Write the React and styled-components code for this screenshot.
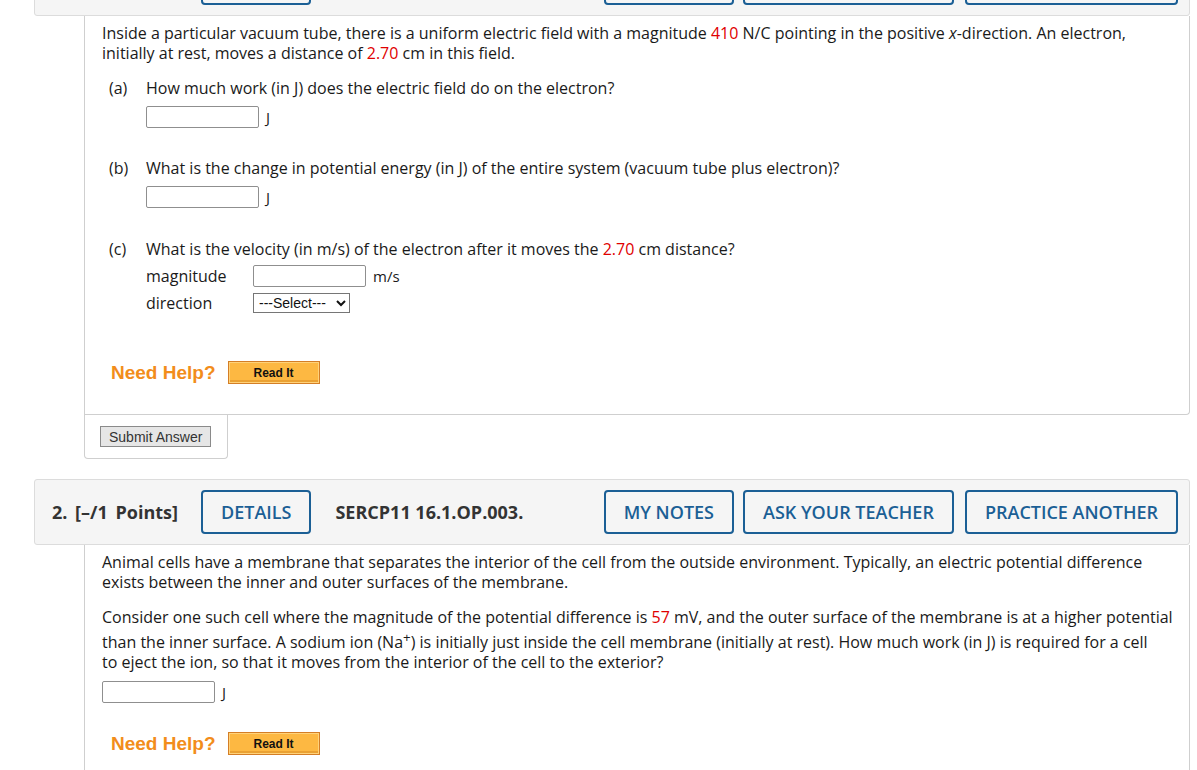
import React from 'react';
import styled, {createGlobalStyle} from 'styled-components';

const GlobalStyle = createGlobalStyle`
  body {
    margin: 0;
    background: #fff;
    overflow: hidden;
  }
`;

const Page = styled.div`
  width: 1156px;
  padding-left: 34px;
  margin-top: -50px;
`;

const Question = styled.section`
  display: flex;
  flex-direction: column;
  margin-bottom: 20px;
`;

const QHeader = styled.div`
  display: flex;
  align-items: center;
  height: 64px;
  padding: 0 11px 0 17px;
  background: #f5f5f5;
  border: 1px solid #dcdcdc;
  border-radius: 3px;
  font-family: "Open Sans", "Noto Sans", sans-serif;
`;

const QNumber = styled.span`
  font-size: 18px;
  font-weight: 700;
  color: #333;
  margin-right: 23px;
  word-spacing: 3px;
`;

const QCode = styled.span`
  font-size: 18px;
  font-weight: 700;
  color: #333;
  margin-left: 24px;
`;

const HeaderButton = styled.button`
  height: 44px;
  padding: 0 18px;
  margin-left: ${p => (p.$push ? 'auto' : '0')};
  margin-right: ${p => p.$gap || 0}px;
  background: transparent;
  border: 2px solid #1b5f95;
  border-radius: 4px;
  color: #1b5f95;
  font-family: "Open Sans", "Noto Sans", sans-serif;
  font-size: 18px;
  font-weight: 600;
  white-space: nowrap;
`;

const QBody = styled.div`
  margin-left: 50px;
  padding: 7px 12px 0 17px;
  height: ${p => p.$height}px;
  box-sizing: border-box;
  border: 1px solid #cfcfcf;
  border-top: none;
  border-bottom-right-radius: ${p => (p.$open ? 0 : 4)}px;
  font-family: "Open Sans", "Noto Sans", sans-serif;
  font-size: 16px;
  line-height: 20px;
  color: #1a1a1a;
`;

const Para = styled.p`
  margin: 0 0 15px;
`;

const Num = styled.span`
  color: #e00000;
`;

const Part = styled.div`
  display: grid;
  grid-template-columns: 37px 1fr;
  margin: 0 0 0 7px;
  padding-bottom: ${p => p.$after || 0}px;
`;

const PartLabel = styled.span``;

const PartContent = styled.div`
  display: flex;
  flex-direction: column;
`;

const AnswerRow = styled.div`
  display: flex;
  align-items: center;
  gap: 7px;
  margin-top: ${p => p.$top || 0}px;
`;

const FieldLabel = styled.span`
  width: 100px;
`;

const AnswerInput = styled.input`
  width: 113px;
  height: 22px;
  box-sizing: border-box;
  border: 1px solid #8f8f8f;
  border-radius: 2px;
  margin: 0;
  background: #fff;
`;

const Unit = styled.span`
  font-size: 15px;
`;

const Select = styled.select`
  width: 97px;
  height: 20px;
  box-sizing: border-box;
  border: 1px solid #767676;
  border-radius: 0;
  background: #fff;
  font-family: "Liberation Sans", Arial, sans-serif;
  font-size: 14px;
  color: #111;
  padding: 0 0 0 1px;
  margin: 0;
`;

const HelpRow = styled.div`
  display: flex;
  align-items: center;
  gap: 12px;
  margin: ${p => p.$top}px 0 0 9px;
`;

const NeedHelp = styled.span`
  font-family: "Liberation Sans", Arial, sans-serif;
  font-size: 19px;
  font-weight: 700;
  color: #f28d1b;
`;

const ReadIt = styled.button`
  width: 92px;
  height: 23px;
  padding: 0;
  background: #fdb842;
  border: 1px solid #d47e26;
  box-shadow: inset 0 0 0 1px #ffd27a, inset 0 -2px 0 1px #eaa133;
  font-family: "Liberation Sans", Arial, sans-serif;
  font-size: 12px;
  font-weight: 700;
  color: #111;
`;

const SubmitTab = styled.div`
  display: flex;
  align-items: center;
  margin-left: 50px;
  width: 144px;
  height: 44px;
  padding-left: 15px;
  box-sizing: border-box;
  border: 1px solid #cfcfcf;
  border-top: none;
  border-radius: 0 0 4px 4px;
`;

const SubmitButton = styled.button`
  height: 21px;
  padding: 0 8px;
  background: #e6e6e6;
  border: 1px solid #8a8a8a;
  border-radius: 0;
  font-family: "Liberation Sans", Arial, sans-serif;
  font-size: 14px;
  color: #333;
`;

const Header = ({num, code}) => (
  <QHeader>
    <QNumber>{num}. [–/1 Points]</QNumber>
    <HeaderButton>DETAILS</HeaderButton>
    <QCode>{code}</QCode>
    <HeaderButton $push $gap={9}>MY NOTES</HeaderButton>
    <HeaderButton $gap={11}>ASK YOUR TEACHER</HeaderButton>
    <HeaderButton>PRACTICE ANOTHER</HeaderButton>
  </QHeader>
);

const Help = ({top}) => (
  <HelpRow $top={top}>
    <NeedHelp>Need Help?</NeedHelp>
    <ReadIt>Read It</ReadIt>
  </HelpRow>
);

export default function App() {
  return (
    <Page>
      <GlobalStyle />
      <Question>
        <Header num={1} code="SERCP11 16.1.OP.001." />
        <QBody $height={399}>
          <Para>
            Inside a particular vacuum tube, there is a uniform electric field with a magnitude <Num>410</Num> N/C
            pointing in the positive <i>x</i>-direction. An electron, initially at rest, moves a distance of{' '}
            <Num>2.70</Num> cm in this field.
          </Para>
          <Part $after={30}>
            <PartLabel>(a)</PartLabel>
            <PartContent>
              How much work (in J) does the electric field do on the electron?
              <AnswerRow $top={8}>
                <AnswerInput />
                <Unit>J</Unit>
              </AnswerRow>
            </PartContent>
          </Part>
          <Part $after={31}>
            <PartLabel>(b)</PartLabel>
            <PartContent>
              What is the change in potential energy (in J) of the entire system (vacuum tube plus electron)?
              <AnswerRow $top={8}>
                <AnswerInput />
                <Unit>J</Unit>
              </AnswerRow>
            </PartContent>
          </Part>
          <Part>
            <PartLabel>(c)</PartLabel>
            <PartContent>
              <span>
                What is the velocity (in m/s) of the electron after it moves the <Num>2.70</Num> cm distance?
              </span>
              <AnswerRow $top={6}>
                <FieldLabel>magnitude</FieldLabel>
                <AnswerInput />
                <Unit>m/s</Unit>
              </AnswerRow>
              <AnswerRow $top={6}>
                <FieldLabel>direction</FieldLabel>
                <Select defaultValue="">
                  <option value="">---Select---</option>
                  <option>+x</option>
                  <option>-x</option>
                </Select>
              </AnswerRow>
            </PartContent>
          </Part>
          <Help top={48} />
        </QBody>
        <SubmitTab>
          <SubmitButton>Submit Answer</SubmitButton>
        </SubmitTab>
      </Question>
      <Question>
        <Header num={2} code="SERCP11 16.1.OP.003." />
        <QBody $height={240} $open>
          <Para>
            Animal cells have a membrane that separates the interior of the cell from the outside environment.
            Typically, an electric potential difference exists between the inner and outer surfaces of the membrane.
          </Para>
          <Para>
            Consider one such cell where the magnitude of the potential difference is <Num>57</Num> mV, and the
            outer surface of the membrane is at a higher potential than the inner surface. A sodium ion (Na
            <sup>+</sup>) is initially just inside the cell membrane (initially at rest). How much work (in J) is
            required for a cell to{'\u00a0'}eject the ion, so that it moves from the interior of the cell to the
            exterior?
          </Para>
          <AnswerRow $top={-6}>
            <AnswerInput />
            <Unit>J</Unit>
          </AnswerRow>
          <Help top={29} />
        </QBody>
      </Question>
    </Page>
  );
}
